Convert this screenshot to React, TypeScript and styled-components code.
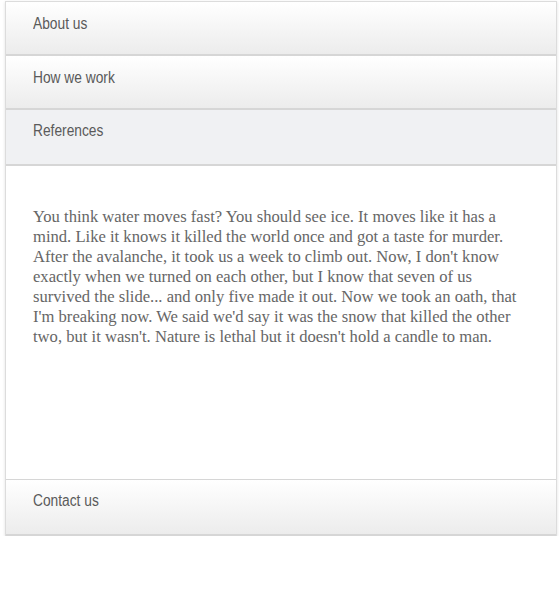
import React, { useState } from 'react';
import styled, { createGlobalStyle } from 'styled-components';

const GlobalStyle = createGlobalStyle`
  body {
    margin: 0;
    background: #fff;
  }
`;

const Accordion = styled.div`
  width: 552px;
  margin: 1px 0 0 5px;
  box-sizing: border-box;
  border: 1px solid #dcdcdc;
  border-bottom: none;
  box-shadow: 0 1px 3px rgba(0, 0, 0, 0.12);
`;

const Header = styled.button<{ $active: boolean; $tall: boolean }>`
  display: flex;
  align-items: center;
  width: 100%;
  height: ${({ $tall }) => ($tall ? '56px' : '54px')};
  padding: 0 0 ${({ $tall }) => ($tall ? '12px' : '9px')} 27px;
  box-sizing: border-box;
  border: none;
  border-bottom: 2px solid #d6d6d6;
  background: ${({ $active }) =>
    $active ? '#f0f1f3' : 'linear-gradient(to bottom, #ffffff 0%, #ececec 100%)'};
  font-family: 'Liberation Sans', Arial, sans-serif;
  font-size: 16px;
  color: #5a5a5a;
  text-align: left;
  cursor: pointer;
`;

/* the original face is a condensed Arial; squeeze the regular one */
const Label = styled.span`
  display: inline-block;
  transform: scaleX(0.86);
  transform-origin: left center;
  white-space: nowrap;
`;

const Panel = styled.div`
  height: 314px;
  box-sizing: border-box;
  padding: 41px 32px 0 27px;
  background: #fff;
  border-bottom: 1px solid #d6d6d6;
  font-family: 'Liberation Serif', 'Times New Roman', serif;
  font-size: 16.6px;
  line-height: 20px;
  color: #666;
`;

const sections = [
  { title: 'About us', body: '' },
  { title: 'How we work', body: '' },
  {
    title: 'References',
    body:
      "You think water moves fast? You should see ice. It moves like it has a mind. Like it knows it killed the world once and got a taste for murder. After the avalanche, it took us a week to climb out. Now, I don't know exactly when we turned on each other, but I know that seven of us survived the slide... and only five made it out. Now we took an oath, that I'm breaking now. We said we'd say it was the snow that killed the other two, but it wasn't. Nature is lethal but it doesn't hold a candle to man.",
  },
  { title: 'Contact us', body: '' },
];

const App: React.FC = () => {
  const [open, setOpen] = useState(2);

  return (
    <>
      <GlobalStyle />
      <Accordion>
        {sections.map((s, i) => (
          <React.Fragment key={s.title}>
            <Header
              $active={open === i}
              $tall={open === i || i === sections.length - 1}
              onClick={() => setOpen(i)}
            >
              <Label>{s.title}</Label>
            </Header>
            {open === i && <Panel>{s.body}</Panel>}
          </React.Fragment>
        ))}
      </Accordion>
    </>
  );
};

export default App;
